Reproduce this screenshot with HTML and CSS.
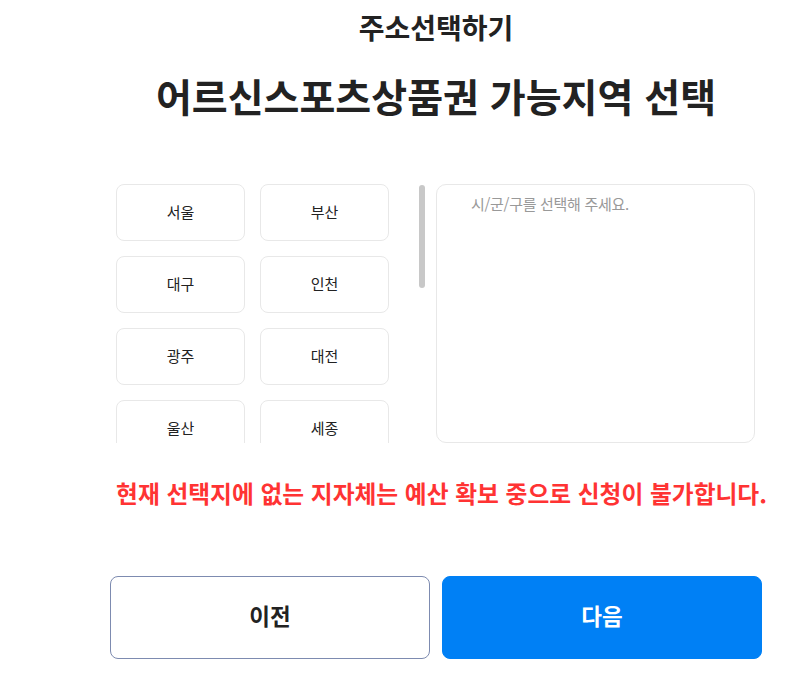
FILE: index.html
```html
<!DOCTYPE html>
<html lang="ko">
<head>
<meta charset="utf-8">
<title>주소선택하기</title>
<link rel="stylesheet" href="styles.css">
</head>
<body>
<div class="page">
  <h2 class="sub-title">주소선택하기</h2>
  <h1 class="main-title">어르신스포츠상품권 가능지역 선택</h1>
  <div class="picker">
    <div class="region-list">
      <button class="region">서울</button>
      <button class="region">부산</button>
      <button class="region">대구</button>
      <button class="region">인천</button>
      <button class="region">광주</button>
      <button class="region">대전</button>
      <button class="region">울산</button>
      <button class="region">세종</button>
      <button class="region">경기</button>
      <button class="region">강원</button>
      <button class="region">충북</button>
      <button class="region">충남</button>
      <button class="region">전북</button>
      <button class="region">전남</button>
      <button class="region">경북</button>
      <button class="region">경남</button>
      <button class="region">제주</button>
    </div>
    <div class="scroll-track"><div class="scroll-thumb"></div></div>
    <div class="district-panel">
      <p class="placeholder">시/군/구를 선택해 주세요.</p>
    </div>
  </div>
  <p class="notice">현재 선택지에 없는 지자체는 예산 확보 중으로 신청이 불가합니다.</p>
  <div class="actions">
    <button class="btn btn-prev">이전</button>
    <button class="btn btn-next">다음</button>
  </div>
</div>
</body>
</html>
```
FILE: styles.css
```css
* { box-sizing: border-box; }
html, body { margin: 0; padding: 0; background: #fff; }
body {
  font-family: "Noto Sans CJK KR", "Noto Sans", sans-serif;
  color: #222;
}
.page {
  width: 652px;
  margin-left: 110px;
  padding-top: 10px;
}
.sub-title {
  margin: 0;
  text-align: center;
  font-size: 28px;
  font-weight: 700;
  line-height: 34px;
  color: #222;
}
.main-title {
  margin: 26px 0 0;
  text-align: center;
  font-size: 39px;
  font-weight: 700;
  line-height: 50px;
  color: #222;
}
.picker {
  display: flex;
  margin-top: 64px;
  padding-left: 6px;
}
.region-list {
  width: 273px;
  height: 259px;
  overflow: hidden;
  display: grid;
  grid-template-columns: 129px 129px;
  grid-auto-rows: 57px;
  gap: 15px;
  align-content: start;
}
.scroll-track {
  width: 6px;
  height: 259px;
  margin: 0 11px 0 30px;
  padding-top: 1px;
}
.scroll-thumb {
  width: 6px;
  height: 103px;
  background: #c8c8c8;
  border-radius: 3px;
}
.region {
  font-family: inherit;
  font-size: 15px;
  color: #222;
  background: #fff;
  border: 1px solid #e8e8e8;
  border-radius: 8px;
  padding: 0 0 3px;
  cursor: pointer;
}
.district-panel {
  width: 319px;
  height: 259px;
  border: 1px solid #e8e8e8;
  border-radius: 10px;
  padding: 7px 34px;
}
.placeholder {
  margin: 0;
  font-size: 15px;
  line-height: 24px;
  color: #999;
  letter-spacing: -0.3px;
}
.notice {
  margin: 35px -11px 0 0;
  text-align: center;
  font-size: 23.75px;
  font-weight: 700;
  line-height: 30px;
  color: #ff3333;
  white-space: nowrap;
}
.actions {
  display: flex;
  gap: 12px;
  margin-top: 68px;
}
.btn {
  flex: 1;
  height: 83px;
  border-radius: 8px;
  font-family: inherit;
  font-size: 22.5px;
  font-weight: 700;
  padding: 0 0 5px;
  cursor: pointer;
}
.btn-prev {
  background: #fff;
  border: 1px solid #7d8bb0;
  color: #222;
}
.btn-next {
  background: #0080f5;
  border: 1px solid #0080f5;
  color: #fff;
}
```
